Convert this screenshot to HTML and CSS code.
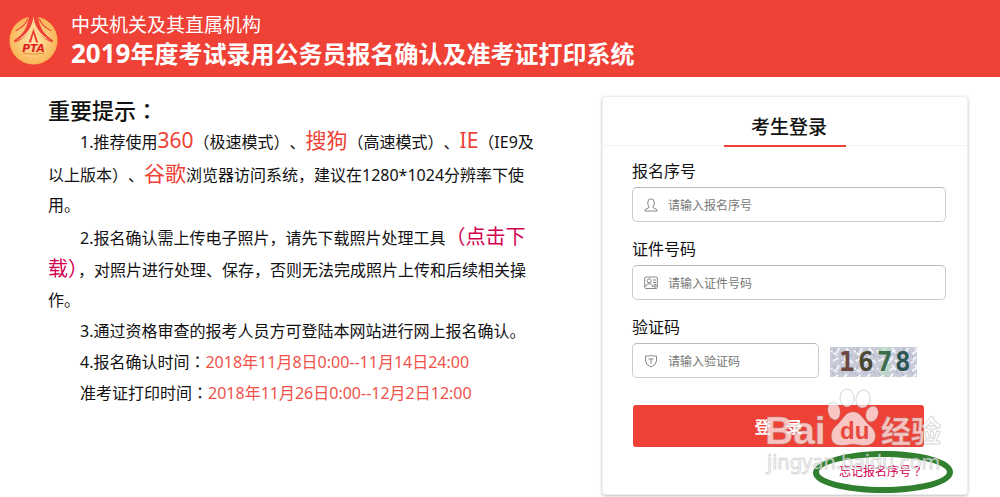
FILE: index.html
```html
<!DOCTYPE html>
<html lang="zh-CN">
<head>
<meta charset="utf-8">
<title>考生登录</title>
<link rel="stylesheet" href="styles.css">
</head>
<body>
<header class="banner">
  <svg class="logo" viewBox="0 0 50 50" aria-hidden="true">
    <defs>
      <radialGradient id="gold"><stop offset="0" stop-color="#ffe9b0"/><stop offset="1" stop-color="#f9b455"/></radialGradient>
    </defs>
    <circle cx="25" cy="25" r="24.500" fill="url(#gold)"/>
    <path d="M20 0H30L30 3Q32 17 45 25L44 27Q31 22 27 12L25 6L23 12Q19 22 6 27L5 25Q18 17 20 3Z" fill="#ef4136"/>
    <path d="M25 0Q24 16 7 25.500Q20 21 25 11Q30 21 43 25.500Q26 16 25 0Z" fill="#ffdc9a"/>
    <path d="M19 3Q17 10 7 15M31 3Q33 10 43 15" fill="none" stroke="#ef4136" stroke-width="1.200"/>
    <path d="M25 13L20 27H22.500L25 18L27.500 27H30Z" fill="#ef4136"/>
    <path d="M14 38Q25 40 36 38" fill="none" stroke="#ef8a3c"/>
    <text x="25" y="37" text-anchor="middle" class="logo-text">PTA</text>
  </svg>
  <div class="banner-text">
    <p class="org">中央机关及其直属机构</p>
    <h1 class="system"><span class="year">2019</span>年度考试录用公务员报名确认及准考证打印系统</h1>
  </div>
</header>
<main class="content">
  <section class="notice">
    <h2 class="notice-title">重要提示<span class="mid" lang="zh-TW">：</span></h2>
    <p class="full-width">1.推荐使用<span class="hot">360</span>（极速模式）、<span class="hot">搜狗</span>（高速模式）、<span class="hot">IE</span>（IE9及以上版本）、<span class="hot">谷歌</span>浏览器访问系统，建议在1280*1024分辨率下使用。</p>
    <p>2.报名确认需上传电子照片，请先下载照片处理工具<a class="download" href="#download">（点击下载）</a>，对照片进行处理、保存，否则无法完成照片上传和后续相关操作。</p>
    <p>3.通过资格审查的报考人员方可登陆本网站进行网上报名确认。</p>
    <p>4.报名确认时间<span class="mid" lang="zh-TW">：</span><span class="time">2018年11月8日0:00--11月14日24:00</span></p>
    <p>准考证打印时间<span class="mid" lang="zh-TW">：</span><span class="time">2018年11月26日0:00--12月2日12:00</span></p>
  </section>
  <section class="card">
    <div class="card-head"><h2 class="card-title">考生登录</h2></div>
    <form class="form">
      <label class="label" for="serial">报名序号</label>
      <div class="field">
        <svg class="icon" viewBox="0 0 14 14" aria-hidden="true"><path d="M5 9Q3.500 7 3.800 4Q4 .8 7 .8T10.200 4Q10.500 7 9 9L9.500 10Q13 10.500 13.200 13H.8Q1 10.500 4.500 10Z"/></svg>
        <input class="input" id="serial" type="text" placeholder="请输入报名序号">
      </div>
      <label class="label" for="idno">证件号码</label>
      <div class="field">
        <svg class="icon" viewBox="0 0 14 14" aria-hidden="true"><rect x=".7" y="1" width="12.600" height="11.500" rx="1"/><circle cx="5.200" cy="4.800" r="2"/><path d="M1.500 11Q2 7.500 5.200 7.500T8.800 11M9 4H12M9 6.500H12M10 8.500H12V11H10Z"/></svg>
        <input class="input" id="idno" type="text" placeholder="请输入证件号码">
      </div>
      <label class="label" for="code">验证码</label>
      <div class="code-row">
        <div class="field">
          <svg class="icon" viewBox="0 0 14 14" aria-hidden="true"><path d="M7 1L8.500 2H12.500V7Q12.300 11 7 13Q1.700 11 1.500 7V2H5.500ZM4.500 5H9.500M7 5V10"/></svg>
          <input class="input" id="code" type="text" placeholder="请输入验证码">
        </div>
        <svg class="captcha" viewBox="0 0 87 30" role="img" aria-label="1678">
          <defs>
            <pattern id="noise" width="23" height="17" patternUnits="userSpaceOnUse">
              <rect width="23" height="17" fill="#c9ccd8"/>
              <path d="M1 4L7 8M9 1L7 6M13 7L19 3M3 14L8 11M12 16L17 10M19 13L23 16M16 1L20 6" stroke="#f3f5fa" stroke-width="2"/>
              <path d="M2 9L5 12M10 5L14 10M20 7L22 10M5 1L3 6M14 13L10 15" stroke="#a9aec6" stroke-width="1"/>
            </pattern>
          </defs>
          <rect width="87" height="30" fill="url(#noise)"/>
          <path d="M48 0H60L58 8H50ZM52 16H60V28H50Z" fill="#b7dfbd" opacity=".6"/>
          <g class="captcha-text">
            <text x="9" y="24" fill="#6b4942">1</text>
            <text x="28" y="24" fill="#4a4936">6</text>
            <text x="47" y="24" fill="#3e6b4b">7</text>
            <text x="65" y="24" fill="#2d5551">8</text>
          </g>
        </svg>
      </div>
      <button class="submit" type="button">登&#12288;录</button>
      <a class="forgot" href="#forgot">忘记报名序号<span class="mid" lang="zh-TW">？</span></a>
    </form>
    <svg class="overlay" viewBox="0 0 194 109" aria-hidden="true">
      <path fill-rule="evenodd" fill="#308030" d="M121 63C159 63 191 71 191 84S159 105 121 105S51 97 51 85S83 63 121 63ZM121 69C88 69 57 76 57 84S88 99 121 99S185 92 185 84S154 69 121 69Z"/>
      <g class="mark">
        <text class="mark-bai" x="3" y="56">Bai</text>
        <ellipse cx="72" cy="23" rx="6" ry="9" transform="rotate(-12 72 23)"/>
        <ellipse cx="85" cy="10" rx="7" ry="9"/>
        <ellipse cx="101" cy="11" rx="7" ry="9" transform="rotate(12 101 11)"/>
        <ellipse cx="110" cy="26" rx="6" ry="8" transform="rotate(20 110 26)"/>
        <path d="M91 24C83 24 81 32 74 38C68 43 67 56 77 57C84 58 86 56 91 56S98 58 105 57C116 56 115 43 108 38C101 32 99 24 91 24Z"/>
        <text class="mark-cn" x="119" y="54">经验</text>
        <text class="mark-url" x="5" y="81">jingyan.baidu.com</text>
      </g>
      <text class="mark-du" x="78" y="51">du</text>
    </svg>
  </section>
</main>
</body>
</html>
```

FILE: styles.css
```css
* { box-sizing: border-box; }
body {
  margin: 0;
  background: #fff;
  color: #111;
  font-family: "Noto Sans", "Noto Sans CJK SC", sans-serif;
  font-size: 16px;
}
h1, h2, p { margin: 0; }
a { text-decoration: none; }

.banner {
  display: flex;
  align-items: center;
  gap: 13px;
  padding: 11px 9px 9px;
  background: #ef4136;
  color: #fff;
}
.logo { flex: none; width: 49px; height: 49px; margin-top: 2px; }
.logo-text { font: italic 900 11px "DejaVu Sans", sans-serif; fill: #e01c1c; }
.org { font-size: 19px; line-height: 28px; }
.system { font-size: 24px; line-height: 29px; font-weight: 700; }
.year { font-size: 26px; }

.content {
  display: flex;
  justify-content: space-between;
  align-items: flex-start;
  gap: 48px;
  padding: 19px 32px 2px 48px;
}
.notice { flex: 0 1 488px; line-height: 30px; }
.notice p { margin-bottom: 1px; text-indent: 32px; }
.full-width { text-spacing-trim: space-all; }
.notice-title { font-size: 22px; line-height: 28px; font-weight: 500; }
.mid { font-family: "Noto Sans CJK TC", sans-serif; text-spacing-trim: space-all; }
.notice .mid { line-height: 1; }
.hot { font-size: 21px; line-height: 32px; color: #ef4136; }
.download { font-size: 20px; line-height: 32px; color: #d4004f; }
.time { color: #f0524a; }

.card {
  position: relative;
  flex: 0 0 366px;
  min-width: 0;
  border: 1px solid #eee;
  border-radius: 4px;
  box-shadow: 0 1px 3px #bbb;
}
.card-head {
  display: flex;
  justify-content: center;
  height: 49px;
  border-bottom: 1px solid #f2f2f2;
}
.card-title {
  width: 122px;
  padding: 13px 0 0 8px;
  border-bottom: 2px solid #ef4136;
  font-size: 19px;
  line-height: 34px;
  font-weight: 500;
  text-align: center;
  height: 50px;
}
.form { display: flex; flex-direction: column; padding: 11px 21px 12px 29px; }
.label { margin-bottom: 2px; line-height: 28px; }
.field {
  display: flex;
  align-items: center;
  gap: 10px;
  min-width: 0;
  height: 35px;
  margin-bottom: 13px;
  padding: 0 11px;
  border: 1px solid #ccc;
  border-top-color: #bbb;
  border-radius: 5px;
}
.icon { flex: none; width: 14px; height: 14px; fill: none; stroke: #888; stroke-width: 1; }
.input {
  flex: 1;
  width: 100%;
  min-width: 0;
  padding: 1px 0 0;
  border: 0;
  outline: 0;
  background: none;
  font: inherit;
  font-size: 12px;
}
.input::placeholder { color: #777; }
.code-row { display: flex; gap: 11px; }
.code-row .field { flex: 0 1 187px; }
.captcha { flex: none; width: 87px; height: 30px; margin-top: 4px; }
.captcha-text { font: 700 26px "DejaVu Sans Mono", monospace; }
.submit {
  height: 42px;
  margin: 14px 22px 0 1px;
  padding: 0;
  border: 0;
  border-radius: 3px;
  background: #ef4136;
  color: #fff;
  font: inherit;
  font-weight: 700;
}
.forgot {
  align-self: flex-end;
  margin: 14px 23px 0 0;
  color: #d4004f;
  font-size: 12px;
  line-height: 20px;
}

.overlay {
  position: absolute;
  right: 11px;
  bottom: -3px;
  width: 194px;
  height: 109px;
  pointer-events: none;
}
.mark { fill: #fff; fill-opacity: .7; stroke: #999; stroke-opacity: .4; stroke-width: 1; }
.mark-bai { font: 700 39px "Liberation Sans", sans-serif; }
.mark-cn { font: 700 30px "Noto Sans CJK SC", sans-serif; }
.mark-url { font: 400 20px "Noto Sans", sans-serif; }
.mark-du { font: 700 24px "Liberation Sans", sans-serif; fill: #e9483f; }
```
